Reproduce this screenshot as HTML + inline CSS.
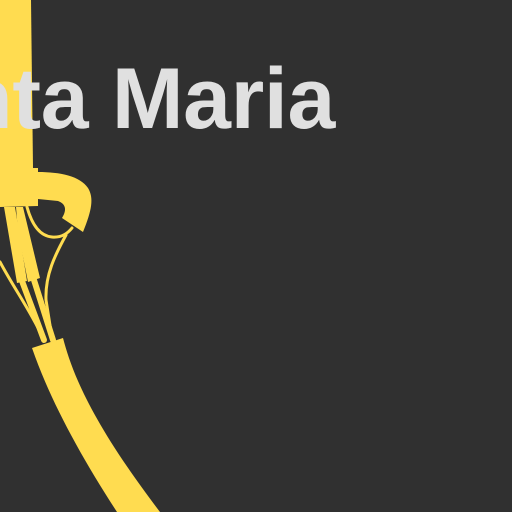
<!DOCTYPE html>
<html><head><style>
html,body{margin:0;padding:0;width:512px;height:512px;overflow:hidden;background:#303030}
#w{position:absolute;left:0;top:0;width:512px;height:512px;overflow:hidden}
svg{position:absolute;left:0;top:0}
.t{position:absolute;right:177px;top:50px;font:bold 86px "Liberation Sans",sans-serif;color:#e0e0e0;white-space:nowrap;letter-spacing:-0.3px}
</style></head><body><div id="w">
<svg width="512" height="512" viewBox="0 0 512 512">
<g fill="#ffdc50" stroke="none">
<polygon points="0,0 31,0 33,168 0,168"/>
<polygon points="0,168 38,168 38,206 0,207"/>
<path d="M38,172 C60,172 80,176 88,188 C94,198 92,210 83,232 L62,218 C67,210 66,204 58,201 L38,199 Z"/>
<path d="M32,348 L63,338 C72,372 90,420 160,512 L117,512 C80,455 50,400 32,348 Z"/>
<polygon points="4,207 15,207 27,281 17,283"/>
<polygon points="16,207 23,207 40,278 28,282 18,232"/>
</g>
<g fill="none" stroke="#ffdc50" stroke-linecap="round">
<path d="M22,281 L44,340" stroke-width="6"/>
<path d="M34,280 L53,340" stroke-width="6"/>
<path d="M0,262 C15,290 30,310 42,336" stroke-width="3"/>
<path d="M27,207 C32,225 40,236 52,237 C62,238 68,233 72,228" stroke-width="3"/>
<path d="M66,235 C55,255 45,275 46,300 L52,338" stroke-width="3"/>
</g>
</svg>
<div class="t">Santa Maria</div>
</div></body></html>
